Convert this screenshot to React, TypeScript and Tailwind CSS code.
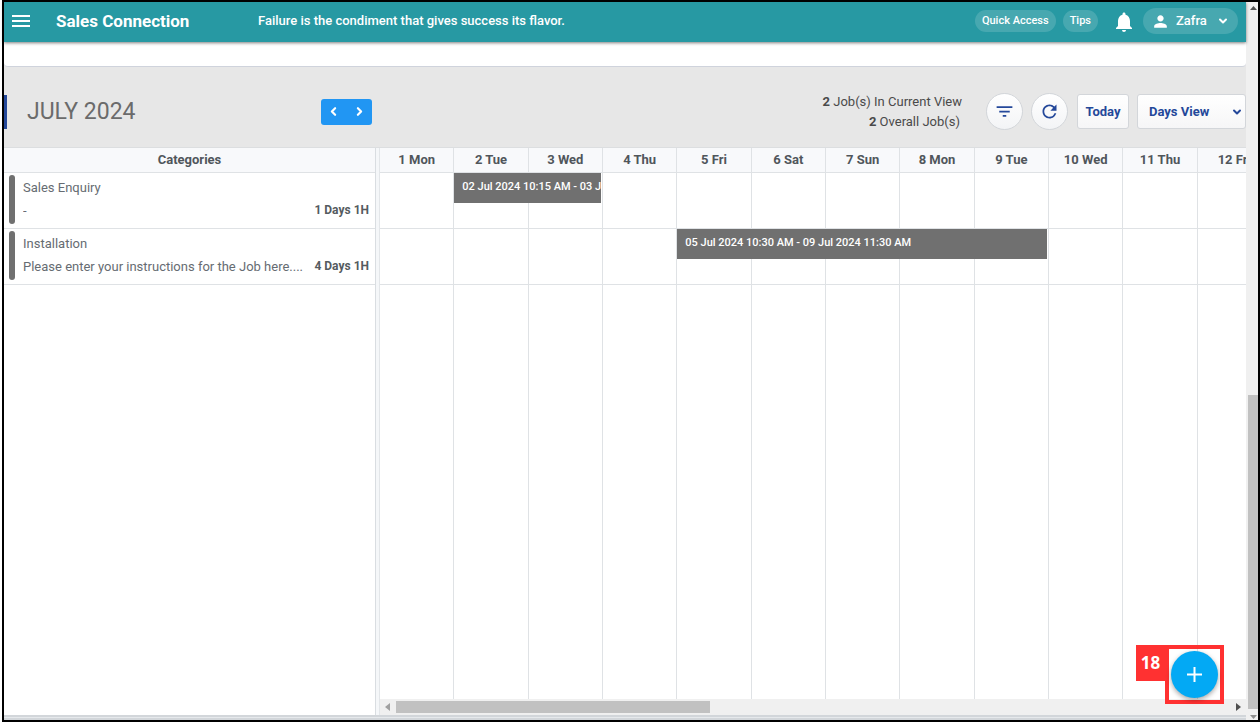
import { useState } from 'react';
import { ChevronDown, ChevronLeft, ChevronRight } from 'lucide-react';
import { MdFilterList, MdMenu, MdNotifications, MdPerson, MdRefresh } from 'react-icons/md';

const DAYS = [
  '1 Mon',
  '2 Tue',
  '3 Wed',
  '4 Thu',
  '5 Fri',
  '6 Sat',
  '7 Sun',
  '8 Mon',
  '9 Tue',
  '10 Wed',
  '11 Thu',
  '12 Fri',
];

interface Job {
  id: number;
  category: string;
  note: string;
  duration: string;
  range: string;
  span: string;
}

const JOBS: Job[] = [
  {
    id: 1,
    category: 'Sales Enquiry',
    note: '-',
    duration: '1 Days 1H',
    range: '02 Jul 2024 10:15 AM - 03 Jul 2024 11:15 AM',
    span: 'col-start-2 col-span-2',
  },
  {
    id: 2,
    category: 'Installation',
    note: 'Please enter your instructions for the Job here....',
    duration: '4 Days 1H',
    range: '05 Jul 2024 10:30 AM - 09 Jul 2024 11:30 AM',
    span: 'col-start-5 col-span-5',
  },
];

function Header() {
  return (
    <header className="z-10 flex h-10 shrink-0 items-center bg-[#2799a3] pb-[2px] text-white shadow-[0_1px_3px_rgba(0,0,0,0.5)]">
      <button aria-label="Menu" className="ml-[5px] flex size-6 items-center justify-center">
        <MdMenu size={24} />
      </button>
      <h1 className="ml-[23px] w-[202px] shrink-0 text-[17px] leading-6 font-bold">Sales Connection</h1>
      <p className="min-w-0 flex-1 truncate text-[13px] leading-5 font-medium">
        Failure is the condiment that gives success its flavor.
      </p>
      <div className="flex shrink-0 items-center pr-2">
        <button className="h-[22px] rounded-full bg-white/15 px-[7px] text-[11px] leading-5 font-medium">
          Quick Access
        </button>
        <button className="ml-[7px] h-[22px] rounded-full bg-white/15 px-[7px] text-[11px] leading-5 font-medium">
          Tips
        </button>
        <button aria-label="Notifications" className="ml-[14px] pt-[2px]">
          <MdNotifications size={24} />
        </button>
        <button className="ml-[7px] flex h-[26px] w-[95px] items-center rounded-full bg-white/15 pl-2 text-[13px] leading-5 font-medium">
          <MdPerson size={19} />
          <span className="ml-[6px] flex-1 text-left">Zafra</span>
          <ChevronDown size={12} strokeWidth={4} className="mr-[9px]" />
        </button>
      </div>
    </header>
  );
}

function Toolbar({ view, onViewChange }: { view: string; onViewChange: (v: string) => void }) {
  const roundButton =
    'flex size-[37px] items-center justify-center rounded-full border border-[#d3d6da] bg-gradient-to-b from-white to-[#f3f4f6] text-[#24489a]';

  return (
    <div className="flex h-20 shrink-0 items-center bg-[#e7e7e7] pt-[9px]">
      <div className="h-[34px] w-[3px] bg-[#24489a]" />
      <h2 className="ml-5 w-[294px] shrink-0 text-[23px] leading-8 text-[#6b6b6b]">JULY 2024</h2>
      <div className="flex h-[26px] w-[51px] shrink-0 rounded-[3px] bg-[#2196f3] text-white">
        <button aria-label="Previous" className="flex flex-1 items-center justify-center">
          <ChevronLeft size={13} strokeWidth={4} />
        </button>
        <button aria-label="Next" className="flex flex-1 items-center justify-center">
          <ChevronRight size={13} strokeWidth={4} />
        </button>
      </div>
      <div className="ml-auto text-right text-[13px] leading-5 text-[#4a4a4a]">
        <p>
          <b>2</b> Job(s) In Current View
        </p>
        <p className="pr-[2px]">
          <b>2</b> Overall Job(s)
        </p>
      </div>
      <div className="ml-6 flex shrink-0 items-center gap-2">
        <button aria-label="Filter" className={roundButton}>
          <MdFilterList size={21} />
        </button>
        <button aria-label="Refresh" className={roundButton}>
          <MdRefresh size={21} />
        </button>
        <button className="ml-px h-[35px] w-[52px] rounded-[3px] border border-[#d3d6da] bg-gradient-to-b from-white to-[#f6f6f7] text-[13px] font-bold text-[#24489a]">
          Today
        </button>
        <div className="relative flex items-center">
          <select
            aria-label="View"
            value={view}
            onChange={(e) => onViewChange(e.target.value)}
            className="h-[35px] w-[109px] appearance-none rounded-[3px] border border-[#d3d6da] bg-gradient-to-b from-white to-[#f6f6f7] pl-[11px] text-[13px] font-bold text-[#24489a]"
          >
            <option>Days View</option>
            <option>Weeks View</option>
            <option>Months View</option>
          </select>
          <ChevronDown
            size={12}
            strokeWidth={4}
            className="pointer-events-none absolute right-[3px] text-[#24489a]"
          />
        </div>
      </div>
    </div>
  );
}

function CategoryPanel() {
  return (
    <section className="flex w-[372px] shrink-0 flex-col border-r border-[#d9dde1]">
      <h3 className="h-[25px] border-b border-[#dfe2e5] bg-[#f8f9fb] text-center text-[13px] leading-6 font-bold text-[#50565b]">
        Categories
      </h3>
      <ul>
        {JOBS.map((job) => (
          <li key={job.id} className="flex h-14 border-b border-[#dfe2e5] pt-[2px] pr-[6px] pl-[5px]">
            <span className="h-[49px] w-[6px] shrink-0 rounded-[3px] bg-[#707070]" />
            <div className="ml-2 min-w-0 flex-1 text-[13px] leading-[23px] text-[#666c72]">
              <p className="pt-px">{job.category}</p>
              <div className="flex justify-between">
                <p className="truncate">{job.note}</p>
                <span className="shrink-0 text-[12px] font-bold text-[#555b60]">{job.duration}</span>
              </div>
            </div>
          </li>
        ))}
      </ul>
    </section>
  );
}

function Timeline() {
  return (
    <section className="flex min-w-0 flex-1 flex-col border-l border-[#e3e6e9]">
      <div className="flex min-h-0 flex-1 flex-col overflow-hidden">
        <div className="grid h-[25px] w-[892px] shrink-0 grid-cols-12 border-b border-[#dfe2e5] bg-[#f8f9fb]">
          {DAYS.map((day) => (
            <div
              key={day}
              className="border-r border-[#dfe2e5] text-center text-[13px] leading-6 font-bold text-[#50565b]"
            >
              {day}
            </div>
          ))}
        </div>
        {JOBS.map((job) => (
          <div key={job.id} className="grid h-14 w-[892px] shrink-0 grid-cols-12 grid-rows-1 border-b border-[#dfe2e5]">
            {DAYS.map((day, i) => (
              <div key={day} className="row-start-1 border-r border-[#dfe2e5]" style={{ gridColumn: i + 1 }} />
            ))}
            <div
              className={`${job.span} z-[1] row-start-1 mr-[2px] h-[30px] overflow-hidden bg-[#707070] px-2 text-[11px] leading-7 font-medium whitespace-nowrap text-white`}
            >
              {job.range}
            </div>
          </div>
        ))}
        <div className="grid w-[892px] flex-1 grid-cols-12">
          {DAYS.map((day) => (
            <div key={day} className="border-r border-[#dfe2e5]" />
          ))}
        </div>
      </div>
      <div className="flex h-4 shrink-0 items-center bg-[#f0f0f0] px-[5px]">
        <svg width="5" height="8" viewBox="0 0 5 8" fill="#a0a0a0">
          <path d="M5 0v8L0 4z" />
        </svg>
        <div className="mx-[6px] flex-1">
          <div className="h-3 w-[377px] max-w-[37.6%] bg-[#c1c1c1]" />
        </div>
        <svg width="5" height="8" viewBox="0 0 5 8" fill="#505050">
          <path d="M0 0v8l5-4z" />
        </svg>
      </div>
    </section>
  );
}

function PageScrollbar() {
  return (
    <div className="flex w-3 shrink-0 flex-col items-end bg-[#f0f0f0]">
      <svg width="7" height="4" viewBox="0 0 7 4" fill="#505050" className="mt-1 mr-px">
        <path d="M0 4h7L3.500 0z" />
      </svg>
      <div className="flex-[386]" />
      <div className="w-[10px] flex-[314] bg-[#c1c1c1]" />
      <svg width="7" height="4" viewBox="0 0 7 4" fill="#909090" className="mt-[6px] mr-px mb-px">
        <path d="M0 0h7L3.500 4z" />
      </svg>
    </div>
  );
}

export default function App() {
  const [view, setView] = useState('Days View');

  return (
    <div className="h-screen bg-white pb-px pl-[2px] font-[Roboto,sans-serif]">
      <div className="flex h-full border-2 border-black">
        <div className="relative flex min-w-0 flex-1 flex-col">
          <Header />
          <div className="h-[25px] shrink-0 bg-[#e7e7e7]">
            <div className="h-full rounded-b-[4px] border-b border-[#cfd3dc] bg-white" />
          </div>
          <Toolbar view={view} onViewChange={setView} />
          <main className="flex min-h-0 flex-1 border-t border-[#dcdee0] bg-white">
            <CategoryPanel />
            <div className="w-[3px] shrink-0 bg-[#f5f7f9]" />
            <Timeline />
          </main>
          <div className="h-[5px] shrink-0 border-y-2 border-[#d2d6da] bg-[#e6e9ec]" />

          <div className="absolute right-[22px] bottom-4 flex items-start">
            <span className="flex h-9 w-[29px] items-center justify-center bg-[#ff3131] font-['Open_Sans',sans-serif] text-[17px] font-bold text-white">
              18
            </span>
            <div className="flex size-[59px] items-center justify-center border-4 border-[#ff3131]">
              <button
                aria-label="Add job"
                className="flex size-[47px] items-center justify-center rounded-full bg-[#03a9f4] text-white shadow-[0_2px_5px_rgba(0,0,0,0.35)]"
              >
                <svg width="15" height="15" viewBox="0 0 15 15" stroke="currentColor" strokeWidth="2">
                  <path d="M7.500 0v15M0 7.500h15" />
                </svg>
              </button>
            </div>
          </div>
        </div>
        <PageScrollbar />
      </div>
    </div>
  );
}
